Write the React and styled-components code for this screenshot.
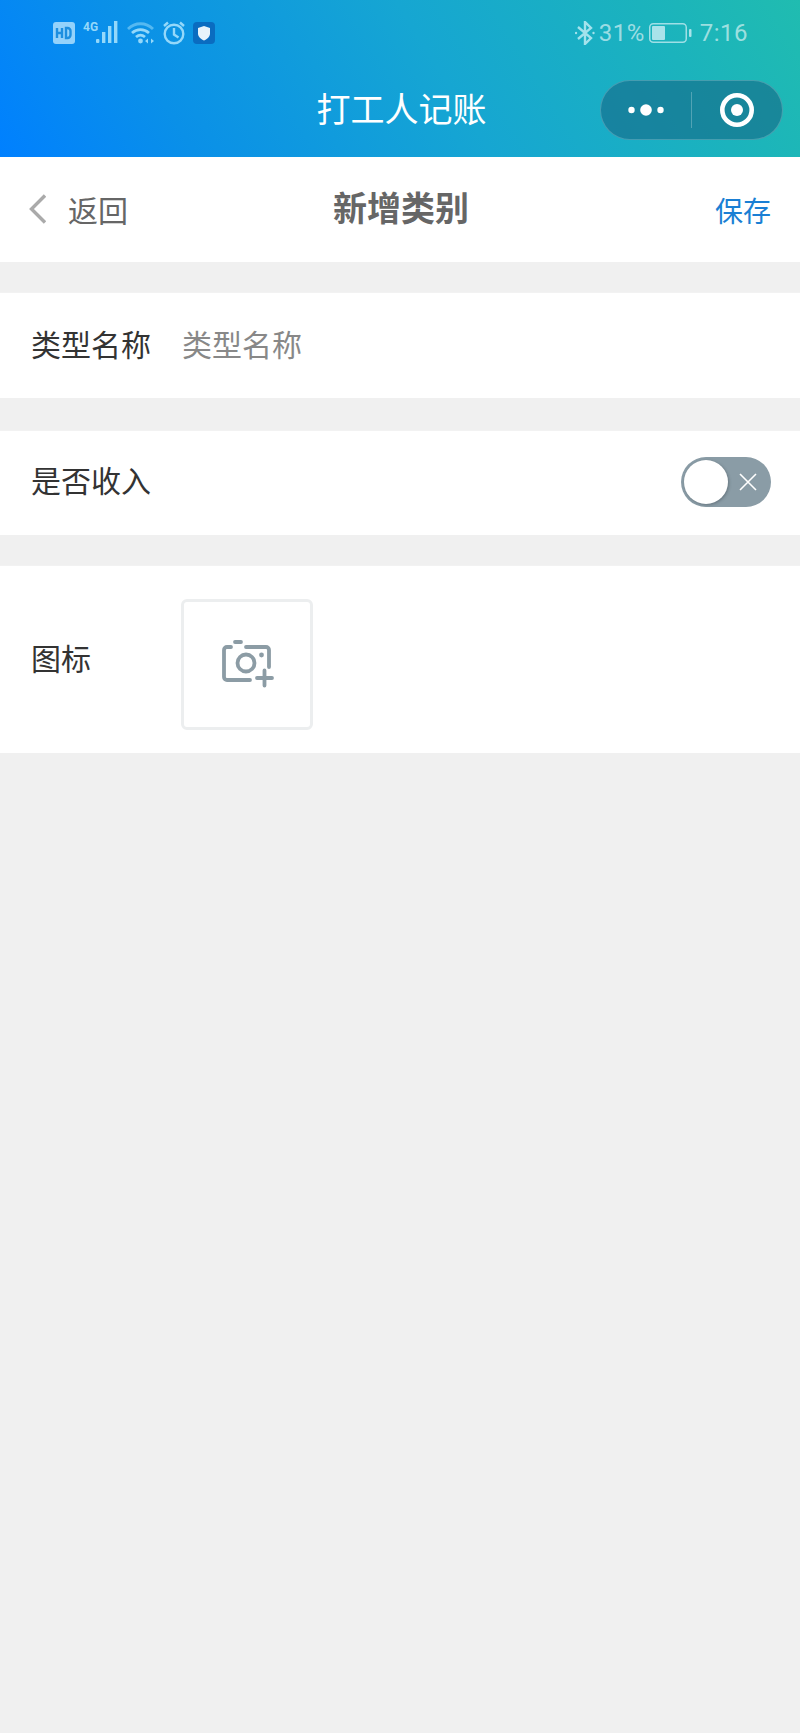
import React from "react";
import styled, { createGlobalStyle } from "styled-components";

const Global = createGlobalStyle`
  html, body { margin: 0; padding: 0; background: #f0f0f0; }
  * { box-sizing: border-box; }
  body { font-family: "Noto Sans CJK SC", "Noto Sans", sans-serif; }
`;
const Page = styled.div`
  width: 800px;
  height: 1733px;
  background: #f0f0f0;
  overflow: hidden;
`;
const Header = styled.header`
  height: 157px;
  background: linear-gradient(58deg, #0080ff 0%, #0a90e8 22%, #16a6d2 55%, #1bb3bd 82%, #20bcb0 100%);
  padding-top: 18px;
`;
const StatusBar = styled.div`
  height: 30px;
  display: flex;
  align-items: center;
  justify-content: space-between;
  padding: 0 52px 0 53px;
  color: rgba(255, 255, 255, 0.58);
`;
const StatusGroup = styled.div`
  display: flex;
  align-items: center;
  gap: ${(p) => p.$gap}px;
`;
const StatusText = styled.span`
  font-family: Roboto, sans-serif;
  font-size: 24px;
  line-height: 30px;
  letter-spacing: ${(p) => p.$spacing || 0}px;
`;
const TitleBar = styled.div`
  height: 60px;
  margin-top: 32px;
  display: grid;
  grid-template-columns: 1fr auto 1fr;
  align-items: center;
  padding: 0 17px 0 18px;
`;
const AppTitle = styled.h1`
  grid-column: 2;
  margin: 0 0 4px 2px;
  font-size: 34px;
  font-weight: 400;
  line-height: 56px;
  color: #fff;
`;
const Capsule = styled.div`
  grid-column: 3;
  justify-self: end;
  width: 183px;
  height: 60px;
  display: grid;
  grid-template-columns: 1fr 1px 1fr;
  align-items: center;
  justify-items: center;
  background: rgba(22, 98, 130, 0.56);
  border: 1px solid rgba(255, 255, 255, 0.2);
  border-radius: 30px;
`;
const CapsuleDivider = styled.div`
  width: 1px;
  height: 36px;
  background: rgba(255, 255, 255, 0.25);
`;
const NavBar = styled.nav`
  height: 105px;
  background: #fff;
  display: grid;
  grid-template-columns: 1fr auto 1fr;
  align-items: center;
  padding: 0 29px;
`;
const Back = styled.div`
  display: flex;
  align-items: center;
  gap: 22px;
  margin-bottom: 2px;
  font-size: 30px;
  color: #666;
`;
const NavTitle = styled.div`
  font-size: 34px;
  font-weight: 700;
  color: #666;
  margin: 0 0 6px 2px;
`;
const Save = styled.div`
  justify-self: end;
  font-size: 28px;
  color: #1a7fd4;
`;
const Row = styled.section`
  margin-top: ${(p) => p.$top}px;
  height: ${(p) => p.$height}px;
  background: #fff;
  border-top: 1px solid #f2f2f2;
  display: flex;
  align-items: center;
  justify-content: ${(p) => (p.$between ? "space-between" : "flex-start")};
  padding: 0 29px 0 31px;
`;
const Label = styled.div`
  width: 151px;
  margin-bottom: ${(p) => p.$lift}px;
  font-size: 30px;
  line-height: 40px;
  color: #333;
`;
const NameInput = styled.input`
  border: 0;
  outline: 0;
  padding: 0;
  flex: 1;
  margin-bottom: 5px;
  font: inherit;
  font-size: 30px;
  line-height: 40px;
  color: #333;
  background: transparent;
  &::placeholder { color: #888; opacity: 1; }
`;
const Toggle = styled.div`
  width: 90px;
  height: 50px;
  margin-bottom: 2px;
  border-radius: 25px;
  background: #8a9ca6;
  display: flex;
  align-items: center;
  padding: 0 3px;
  gap: 11px;
`;
const Knob = styled.div`
  width: 44px;
  height: 44px;
  border-radius: 50%;
  background: #fff;
  box-shadow: 1px 1px 3px rgba(60, 70, 80, 0.45);
`;
const Upload = styled.div`
  width: 132px;
  height: 131px;
  margin: 9px 0 0 -1px;
  padding-left: 2px;
  border: 3px solid #eceeef;
  border-radius: 6px;
  display: flex;
  align-items: center;
  justify-content: center;
`;

const Hd = () => (
  <svg width="22" height="22" viewBox="0 0 22 22">
    <rect width="22" height="22" rx="3" fill="#94d2fb" />
    <path d="M4 6v10M9 6v10M4 11h5M13 6v10h1.5a3 3 0 0 0 3-3V9a3 3 0 0 0-3-3z" fill="none" stroke="#1d8fe0" strokeWidth="2.4" />
  </svg>
);
const Signal = () => (
  <svg width="36" height="24" viewBox="0 0 36 24" fill="#94d8fa">
    <text x="0" y="10" fontFamily="Roboto, sans-serif" fontSize="12" fontWeight="700">4G</text>
    <rect x="13" y="18" width="3.4" height="4" rx="1" />
    <rect x="19" y="11" width="3.4" height="11" />
    <rect x="25" y="5" width="3.4" height="17" />
    <rect x="31" y="0" width="3.4" height="22" />
  </svg>
);
const Wifi = () => (
  <svg width="28" height="24" viewBox="0 0 28 24" fill="none" stroke="#94d8fa" strokeWidth="2.8">
    <path d="M1 8C8 1 19 1 26 8" opacity="0.55" />
    <path d="M5 12c5-4.5 12-4.5 17 0" />
    <path d="M9 16c3-2.5 6-2.5 9 0" />
    <circle cx="13.5" cy="20" r="2.4" fill="#94d8fa" stroke="none" />
    <path d="M21 17.5l-3 2.5 3 2.5zM24 17.5l3 2.5-3 2.5z" fill="#94d8fa" stroke="none" />
  </svg>
);
const Alarm = () => (
  <svg width="22" height="24" viewBox="0 0 22 24" fill="none" stroke="#94d8fa" strokeWidth="2.4">
    <circle cx="11" cy="13" r="9.3" />
    <path d="M11 7v6.5l4.5 3" />
    <path d="M1 5l4-3.5M21 5l-4-3.5" />
  </svg>
);
const Shield = () => (
  <svg width="22" height="22" viewBox="0 0 22 22">
    <rect width="22" height="22" rx="4" fill="#0a6cc0" />
    <path d="M11 4l6 2v5.5c0 3.5-2.8 5.5-6 7-3.2-1.5-6-3.5-6-7V6z" fill="#e8f3fb" />
  </svg>
);
const Bluetooth = () => (
  <svg width="20" height="24" viewBox="0 0 20 24" fill="none" stroke="#a4e2ec" strokeWidth="2.4">
    <path d="M3 6l13 11-6 6V1l6 6L3 18" />
    <circle cx="1" cy="12" r="1.2" fill="#a4e2ec" stroke="none" />
    <circle cx="18.5" cy="12" r="1.2" fill="#a4e2ec" stroke="none" />
  </svg>
);
const Battery = () => (
  <svg width="43" height="20" viewBox="0 0 43 20">
    <rect x="0.75" y="0.75" width="36.5" height="18.5" rx="3.5" fill="none" stroke="#9fdfe6" strokeWidth="1.5" />
    <rect x="3" y="3" width="13" height="14" rx="1" fill="#a9e3ea" />
    <rect x="40" y="6" width="2.5" height="8" rx="1" fill="#a9e3ea" />
  </svg>
);
const Dots = () => (
  <svg width="36" height="14" viewBox="0 0 36 14" fill="#fff">
    <circle cx="3.5" cy="7" r="3.2" />
    <circle cx="18" cy="7" r="5.8" />
    <circle cx="32.5" cy="7" r="3.2" />
  </svg>
);
const Target = () => (
  <svg width="34" height="34" viewBox="0 0 34 34">
    <circle cx="17" cy="17" r="14.7" fill="none" stroke="#fff" strokeWidth="4.6" />
    <circle cx="17" cy="17" r="6" fill="#fff" />
  </svg>
);
const Chevron = () => (
  <svg width="17" height="30" viewBox="0 0 17 30" fill="none" stroke="#aaa" strokeWidth="3.4">
    <path d="M16 1.5L2.5 15 16 28.5" />
  </svg>
);
const Cross = () => (
  <svg width="18" height="18" viewBox="0 0 18 18" stroke="#fff" strokeWidth="1.6">
    <path d="M1 1l16 16M17 1L1 17" />
  </svg>
);
const CameraPlus = () => (
  <svg width="52" height="48" viewBox="0 0 52 48" fill="none" stroke="#8c9ca5" strokeWidth="3.8" strokeLinecap="round">
    <path d="M13 2h6" />
    <path d="M9 7H5a3 3 0 0 0-3 3v27a3 3 0 0 0 3 3h23" />
    <path d="M24 7h20a3 3 0 0 1 3 3v17" />
    <circle cx="24" cy="23" r="8.5" />
    <circle cx="39.5" cy="15" r="2.4" fill="#8c9ca5" stroke="none" />
    <path d="M35 38h15M42.5 30.5v15" />
  </svg>
);

export default function App() {
  return (
    <Page>
      <Global />
      <Header>
        <StatusBar>
          <StatusGroup $gap={8}>
            <Hd />
            <Signal />
            <Wifi />
            <Alarm />
            <Shield />
          </StatusGroup>
          <StatusGroup $gap={4}>
            <Bluetooth />
            <StatusText $spacing={0.5}>31%</StatusText>
            <StatusGroup $gap={8}>
              <Battery />
              <StatusText $spacing={0.5}>7:16</StatusText>
            </StatusGroup>
          </StatusGroup>
        </StatusBar>
        <TitleBar>
          <AppTitle>打工人记账</AppTitle>
          <Capsule>
            <Dots />
            <CapsuleDivider />
            <Target />
          </Capsule>
        </TitleBar>
      </Header>
      <NavBar>
        <Back>
          <Chevron />
          <span>返回</span>
        </Back>
        <NavTitle>新增类别</NavTitle>
        <Save>保存</Save>
      </NavBar>
      <Row $top={30} $height={106}>
        <Label $lift={5}>类型名称</Label>
        <NameInput placeholder="类型名称" />
      </Row>
      <Row $top={32} $height={105} $between>
        <Label $lift={8}>是否收入</Label>
        <Toggle>
          <Knob />
          <Cross />
        </Toggle>
      </Row>
      <Row $top={30} $height={188}>
        <Label $lift={5}>图标</Label>
        <Upload>
          <CameraPlus />
        </Upload>
      </Row>
    </Page>
  );
}
